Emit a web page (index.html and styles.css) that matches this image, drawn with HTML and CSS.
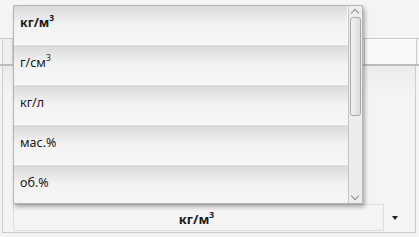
FILE: index.html
```html
<!DOCTYPE html>
<html>
<head>
    <meta charset="utf-8">
    <title>Units</title>
    <link rel="stylesheet" href="styles.css">
</head>
<body>
<div class="page">
    <div class="header">
        <div class="h_edge"></div>
        <div class="h_cell h_small"></div>
        <div class="h_cell h_wide"></div>
        <div class="h_cell h_right"></div>
    </div>
    <div class="rows">
        <div class="combo_line">
            <div class="combo">кг/м<sup>3</sup></div>
            <div class="arrow"></div>
        </div>
    </div>

    <div class="popup">
        <ul class="list">
            <li class="item selected">кг/м<sup>3</sup></li>
            <li class="item">г/см<sup>3</sup></li>
            <li class="item">кг/л</li>
            <li class="item">мас.%</li>
            <li class="item">об.%</li>
        </ul>
        <div class="scroll">
            <span class="chev up"></span>
            <div class="thumb"></div>
            <span class="chev down"></span>
        </div>
    </div>
</div>
</body>
</html>
```

FILE: styles.css
```css
body {
    margin: 0;
    background: #f4f4f4;
    font: 12.5px/1 "Noto Sans", "Open Sans", sans-serif;
    color: #1a1a1a;
}

.page {
    position: relative;
    width: 419px;
    height: 237px;
    overflow: hidden;
}

/* table header behind the popup */
.header {
    display: flex;
    margin-top: 38px;
    height: 25px;
    border-top: 1px solid #c9c9c9;
    border-bottom: 2px solid #bdbdbd;
}
.h_edge { width: 2px; }
.h_cell {
    background: #fafafa;
    border-left: 1px solid #cfcfcf;
}
.h_small { width: 9px; background: #efefef; }
.h_wide { width: 351px; }
.h_right {
    width: 51px;
    border-right: 1px solid #cfcfcf;
}

.rows {
    margin: 0 3px 0 2px;
    height: 166px;
    border-left: 1px solid #cdcdcd;
    border-right: 1px solid #cdcdcd;
    border-bottom: 1px solid #cdcdcd;
    background: linear-gradient(#ebebeb, #f4f4f4 30px);
    display: flex;
    flex-direction: column;
    justify-content: flex-end;
}

.combo_line {
    display: flex;
    align-items: center;
    padding: 0 0 1px 10px;
}
.combo {
    width: 365px;
    height: 25px;
    border: 1px solid #dedede;
    font-weight: bold;
    font-size: 13px;
    text-align: center;
    line-height: 29px;
    padding-right: 4px;
    box-sizing: content-box;
}
.combo sup, .item sup {
    font-size: 8.5px;
    vertical-align: 6px;
    line-height: 0;
}
.arrow {
    margin-left: 8px;
    margin-top: 1px;
    width: 0;
    height: 0;
    border-left: 3.5px solid transparent;
    border-right: 3.5px solid transparent;
    border-top: 4px solid #222;
}

/* dropdown popup */
.popup {
    position: absolute;
    left: 13px;
    top: 5px;
    width: 348px;
    height: 197px;
    border: 1px solid #b4b4b4;
    display: flex;
    background: #f4f4f4;
    box-shadow: 2px 3px 4px rgba(0, 0, 0, 0.3);
}

.list {
    list-style: none;
    margin: 0;
    padding: 0;
    flex: 1;
    overflow: hidden;
}
.item {
    height: 40px;
    border-bottom: 1px solid #fdfdfd;
    padding: 12px 0 0 6px;
    box-sizing: border-box;
    background: linear-gradient(#d9d9d9, #f3f3f3 50%, #f5f5f5);
}
.item:first-child { height: 39px; padding-top: 11px; }
.selected {
    font-weight: bold;
    border-right: 1px solid #fdfdfd;
}

.scroll {
    width: 13px;
    border-left: 1px solid #c4c4c4;
    background: #ededed;
    position: relative;
}
.chev {
    position: absolute;
    left: 3px;
    width: 5px;
    height: 5px;
    border-left: 1px solid #8a8a8a;
    border-top: 1px solid #8a8a8a;
}
.up { top: 4px; transform: rotate(45deg); }
.down { bottom: 4px; transform: rotate(225deg); }
.thumb {
    position: absolute;
    left: 1px;
    top: 11px;
    width: 9px;
    height: 97px;
    border: 1px solid #a8a8a8;
    border-radius: 3px;
    background: linear-gradient(90deg, #f2f2f2, #dcdcdc);
}
```
